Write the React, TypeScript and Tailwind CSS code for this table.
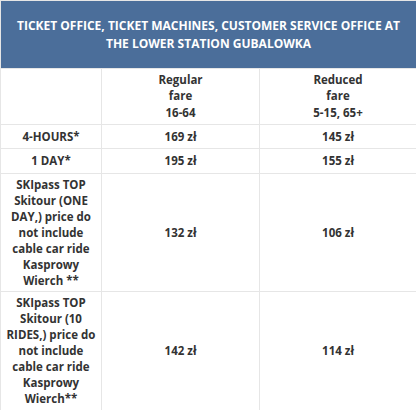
import React from "react";

const rows = [
  { label: "4-HOURS*", a: "169 zł", b: "145 zł", h: "h-[24px]" },
  { label: "1 DAY*", a: "195 zł", b: "155 zł", h: "h-[25px]" },
  {
    label: "SKIpass TOP Skitour (ONE DAY,) price do not include cable car ride Kasprowy Wierch **",
    a: "132 zł",
    b: "106 zł",
    h: "h-[118px]",
  },
  {
    label: "SKIpass TOP Skitour (10 RIDES,) price do not include cable car ride Kasprowy Wierch**",
    a: "142 zł",
    b: "114 zł",
    h: "h-[119px]",
  },
];

export default function App() {
  return (
    <div
      className="w-[416px] h-[410px] bg-white overflow-hidden text-[#333]"
      style={{ fontFamily: '"Open Sans", "Liberation Sans", sans-serif' }}
    >
      <table className="w-[416px] border-collapse table-fixed">
        <colgroup>
          <col className="w-[101px]" />
          <col className="w-[158px]" />
          <col className="w-[157px]" />
        </colgroup>
        <thead>
          <tr className="h-[68px]">
            <th
              colSpan={3}
              className="bg-[#4b6e9a] text-white text-[12px] leading-[18px] font-bold text-center px-2 border border-[#e6e6e6]"
            >
              TICKET OFFICE, TICKET MACHINES, CUSTOMER SERVICE OFFICE AT
              <br />
              THE LOWER STATION GUBALOWKA
            </th>
          </tr>
        </thead>
        <tbody className="text-[11.5px] leading-[16px] font-bold text-center">
          <tr className="h-[56px]">
            <td className="border border-[#e6e6e6] leading-[16.5px]"></td>
            <td className="border border-[#e6e6e6] leading-[16.5px]">
              Regular
              <br />
              fare
              <br />
              16-64
            </td>
            <td className="border border-[#e6e6e6] leading-[16.5px]">
              Reduced
              <br />
              fare
              <br />
              5-15, 65+
            </td>
          </tr>
          {rows.map((r) => (
            <tr key={r.label} className={r.h}>
              <td className="border border-[#e6e6e6] px-[4px]">{r.label}</td>
              <td className="border border-[#e6e6e6]">{r.a}</td>
              <td className="border border-[#e6e6e6]">{r.b}</td>
            </tr>
          ))}
        </tbody>
      </table>
    </div>
  );
}
